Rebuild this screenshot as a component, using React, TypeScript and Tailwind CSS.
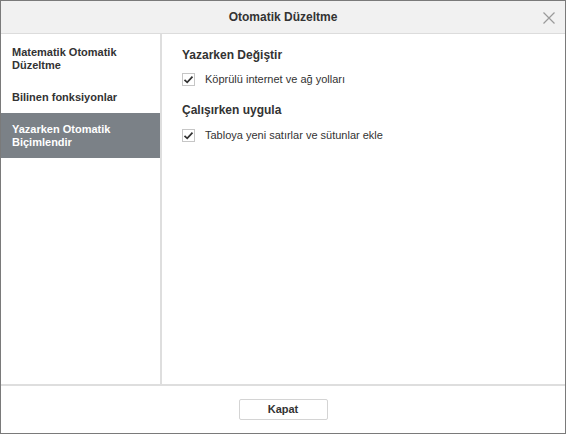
import { useState } from 'react'

const SECTIONS = [
  { id: 'math', label: ['Matematik Otomatik', 'Düzeltme'] },
  { id: 'func', label: ['Bilinen fonksiyonlar'] },
  { id: 'type', label: ['Yazarken Otomatik', 'Biçimlendir'] },
]

const Check = ({ checked, onToggle, label }: { checked: boolean; onToggle: () => void; label: string }) => (
  <button type="button" onClick={onToggle} className="flex items-center gap-[10px] text-left">
    <span className="w-[13px] h-[13px] border border-[#c6c6c6] bg-white flex items-center justify-center">
      {checked && (
        <svg width="11" height="11" viewBox="0 0 11 11">
          <path d="M1.5 5.8 L4.2 8.4 L9.5 2.6" fill="none" stroke="#333" strokeWidth="1.7" />
        </svg>
      )}
    </span>
    <span className="text-[11px] leading-[13px] text-[#333]">{label}</span>
  </button>
)

export default function App() {
  const [active, setActive] = useState('type')
  const [links, setLinks] = useState(true)
  const [rows, setRows] = useState(true)

  return (
    <div className="w-[566px] h-[434px] flex flex-col border border-[#7a7a7a] bg-white font-['Liberation_Sans',Arial,sans-serif] text-[#333]">
      {/* Header */}
      <div className="h-[33px] shrink-0 flex items-center justify-center relative bg-[#f1f1f1] border-b border-[#dcdcdc]">
        <span className="text-[12px] font-bold text-[#333]">Otomatik Düzeltme</span>
        <button type="button" className="absolute right-[10px] top-[11px] w-[12px] h-[12px]">
          <svg width="12" height="12" viewBox="0 0 12 12">
            <path d="M0.5 0.5 L11.5 11.5 M11.5 0.5 L0.5 11.5" stroke="#9a9a9a" strokeWidth="1.2" />
          </svg>
        </button>
      </div>

      {/* Body */}
      <div className="flex flex-1 min-h-0">
        <div className="w-[161px] shrink-0 border-r-2 border-[#dedede]">
          {SECTIONS.map((s, i) => (
            <button
              key={s.id}
              type="button"
              onClick={() => setActive(s.id)}
              className={`block w-full text-left px-[11px] ${i === 0 ? 'pt-[12px]' : 'pt-[10px]'} pb-[9px] text-[11px] leading-[13px] font-bold ${
                active === s.id ? 'bg-[#7b8187] text-white' : 'text-[#333]'
              }`}
            >
              {s.label.map(l => <div key={l}>{l}</div>)}
            </button>
          ))}
        </div>

        <div className="flex-1 pl-[20px] pt-[14px]">
          <div className="text-[12px] leading-[14px] font-bold text-[#333]">Yazarken Değiştir</div>
          <div className="mt-[11px]">
            <Check checked={links} onToggle={() => setLinks(v => !v)} label="Köprülü internet ve ağ yolları" />
          </div>
          <div className="mt-[17px] text-[12px] leading-[14px] font-bold text-[#333]">Çalışırken uygula</div>
          <div className="mt-[12px]">
            <Check checked={rows} onToggle={() => setRows(v => !v)} label="Tabloya yeni satırlar ve sütunlar ekle" />
          </div>
        </div>
      </div>

      {/* Footer */}
      <div className="h-[49px] shrink-0 border-t-2 border-[#dedede] flex items-center justify-center">
        <button type="button" className="w-[89px] h-[21px] border border-[#d4d4d4] rounded-[2px] bg-white text-[11px] font-bold text-[#333]">
          Kapat
        </button>
      </div>
    </div>
  )
}
